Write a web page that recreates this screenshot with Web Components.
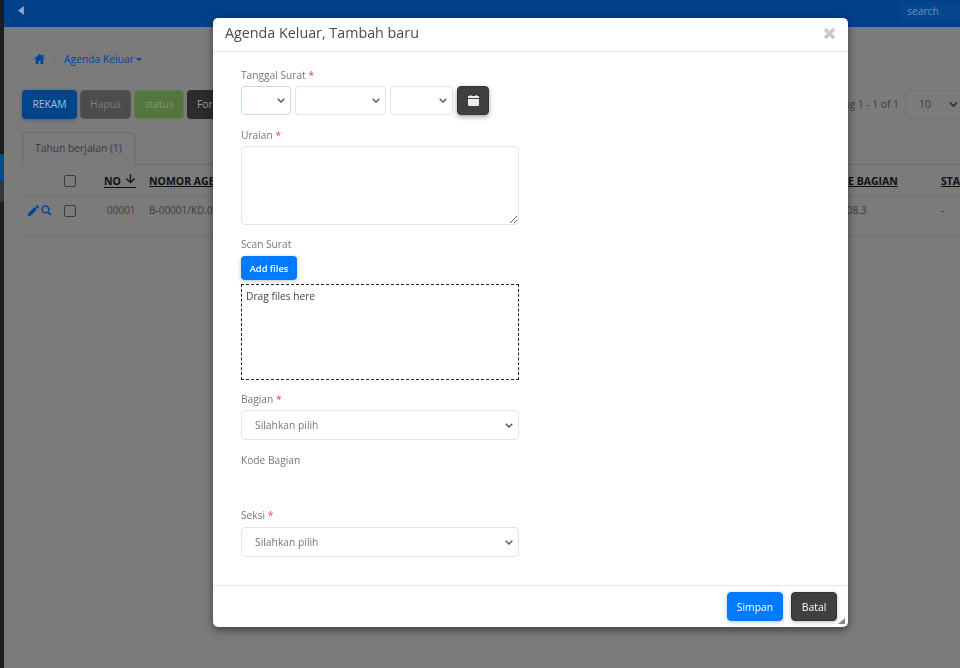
<!DOCTYPE html>
<html lang="id"><head><meta charset="utf-8"><title>Agenda Keluar</title>
<style>
html,body{margin:0;height:100%;overflow:hidden}
body{font-family:"Open Sans","Liberation Sans",sans-serif;background:#7b7b7b;font-size:10.300px;color:#444}
</style></head><body>
<x-app>
  <x-topbar slot="top"></x-topbar>
  <x-crumbs></x-crumbs>
  <x-toolbar></x-toolbar>
  <x-tabs></x-tabs>
  <x-table></x-table>
</x-app>
<x-modal title-text="Agenda Keluar, Tambah baru">
  <x-field label="Tanggal Surat" required gap="4"><x-date-row></x-date-row></x-field>
  <x-field label="Uraian" required gap="4" top="14"><x-area></x-area></x-field>
  <x-field label="Scan Surat" gap="5" top="13"><x-drop></x-drop></x-field>
  <x-field label="Bagian" required gap="4" top="13"><x-sel text="Silahkan pilih"></x-sel></x-field>
  <x-field label="Kode Bagian" top="14" bottom="42"></x-field>
  <x-field label="Seksi" required gap="5"><x-sel text="Silahkan pilih"></x-sel></x-field>
  <x-btn slot="foot" kind="blue">Simpan</x-btn>
  <x-btn slot="foot" kind="dark">Batal</x-btn>
</x-modal>
<script>
function def(name, css, html, init){
  customElements.define(name, class extends HTMLElement{
    connectedCallback(){
      if(this.shadowRoot) return;
      const r=this.attachShadow({mode:'open'});
      r.innerHTML='<style>'+css+'</style>'+(typeof html==='function'?html(this):html);
      if(init) init(this,r);
    }
  });
}
def('x-app',`:host{display:block;position:relative;width:960px;height:668px;overflow:hidden}
.side{position:absolute;left:0;top:0;bottom:0;width:4px;background:#1b1e21}
.side i{position:absolute;left:0;width:4px}
.main{margin-left:4px;display:flex;flex-direction:column}`,
`<div class="side"><i style="top:154px;height:27px;background:#00488f"></i><i style="top:181px;height:21px;background:#33383c"></i></div>
<div class="main"><slot name="top"></slot><slot></slot></div>`);

def('x-topbar',`:host{display:flex;height:27px;background:#024089;align-items:flex-start;justify-content:space-between;box-sizing:border-box;padding:2px 0 0 14px}
svg{width:6px;height:9px;margin-top:4px;display:block}
.s{width:60px;height:18px;background:#05468e;border-radius:3px 0 0 3px;color:#7393bb;font-size:10.300px;line-height:18px;padding-left:7px;box-sizing:border-box}`,
`<svg viewBox="0 0 7 11"><path d="M7 0v11L0 5.500z" fill="#8fa9cc"/></svg><div class="s">search</div>`);

def('x-crumbs',`:host{display:flex;align-items:center;height:24px;margin:20px 0 0 30px;color:#01469c;font-size:10.300px}
svg{width:11px;height:10px;display:block}
.sep{color:#666;margin:0 8.300px 0 7px}
.car{width:0;height:0;border:3px solid transparent;border-top:3px solid #01469c;border-bottom:0;margin-left:2px}`,
`<svg viewBox="0 0 13 12"><path d="M6.500 0 0 5.600l.7.800L2 5.300V12h3.300V8h2.400v4H11V5.300l1.300 1.100.7-.8L11 3.900V1H9v1.200z" fill="#01469c"/></svg><span class="sep">/</span><span>Agenda Keluar</span><span class="car"></span>`);

def('x-toolbar',`:host{display:flex;align-items:center;height:30px;margin:18px 0 0 18px;gap:3px;font-size:10.300px}
b{font-weight:400;height:29px;line-height:29px;border-radius:4px;text-align:center;box-sizing:border-box}
.r{background:#00458b;color:#a9bedb;width:55px;box-shadow:0 1px 4px rgba(0,0,0,.25)}
.h{background:#4c4c4c;color:#7c7c7c;width:51px;border:1px solid #565656;line-height:27px}
.s{background:#55753f;color:#7d9968;width:50px;border:1px solid #5f8048;line-height:27px}
.f{background:#2c2c2c;color:#9c9c9c;width:120px;text-align:left;padding-left:10px}
.sp{flex:1}
.t{color:#3c3c3c;margin-right:3px}
.v{width:70px;height:29px;border:1px solid #707070;border-radius:4px;box-sizing:border-box;color:#3c3c3c;line-height:27px;padding-left:13px;margin-right:-15px;position:relative}
.v svg{position:absolute;left:43px;top:10px;width:9px;height:7px}`,
`<b class="r">REKAM</b><b class="h">Hapus</b><b class="s">status</b><b class="f">Format</b><span class="sp"></span><span class="t">Showing 1 - 1 of 1</span><div class="v">10<svg viewBox="0 0 9 7"><path d="M1 1.500l3.500 3.500L8 1.500" fill="none" stroke="#2d2d2d" stroke-width="1.600"/></svg></div>`);

def('x-tabs',`:host{display:block;margin:13px 0 0 18px;height:32px;border-bottom:1px solid #6c6c6c}
div{display:inline-block;box-sizing:border-box;width:113px;height:33px;border:1px solid #6c6c6c;border-bottom:0;border-radius:4px 4px 0 0;padding-left:12px;line-height:31px;color:#3a3a3a;background:#7b7b7b}`,
`<div>Tahun berjalan (1)</div>`);

def('x-table',`:host{display:block;margin-left:18px;font-size:10px;color:#3c3c3c}
.row{display:grid;grid-template-columns:42px 40px 45px 676px 116px 1fr;border-bottom:1px solid #6e6e6e;align-items:center}
.head{height:32px;color:#111;font-weight:700;box-sizing:border-box;font-size:10.500px;padding-top:1px}
.body{height:39px;box-sizing:border-box;padding-bottom:12px}
u{text-underline-offset:1px;white-space:nowrap}
.st{overflow:hidden;white-space:nowrap}
.box{border:1px solid #3c3c3c;border-radius:2px;display:block;box-sizing:border-box;width:12px;height:12px}
.body .box{margin-top:2px}
.head .box{margin-top:-1px}
.act{display:flex;gap:2px;padding-left:6px}
.act svg{width:11px;height:11px;display:block}
.no{display:flex;align-items:center;gap:4px;border-bottom:1px solid #111;width:32px;line-height:12px}
.no svg{width:11px;height:11px;margin-top:-4px}
.n{padding-left:3px}`,
`<div class="row head"><span></span><span class="box"></span><span class="no">NO<svg viewBox="0 0 12 12"><path d="M6 1v9.500M1.500 6 6 10.500 10.500 6" fill="none" stroke="#111" stroke-width="1.400"/></svg></span><u>NOMOR AGENDA</u><u>KODE BAGIAN</u><u class="st">STA</u></div>
<div class="row body"><span class="act"><svg viewBox="0 0 12 12"><path d="M0 12V9.300L7 2.300 9.700 5 2.700 12zM7.900 1.400 9 .3a1 1 0 0 1 1.400 0l1.300 1.300a1 1 0 0 1 0 1.400L10.600 4.100z" fill="#01469c"/></svg><svg viewBox="0 0 12 12"><circle cx="4.800" cy="4.800" r="3.700" fill="none" stroke="#01469c" stroke-width="1.700"/><path d="M7.600 7.600 11 11" stroke="#01469c" stroke-width="2"/></svg></span><span class="box"></span><span class="n">00001</span><span>B-00001/KD.08</span><span>KD.008.3</span><span>-</span></div>`);

def('x-modal',`:host{position:fixed;left:213px;top:18px;width:635px;height:609px;background:#fff;border-radius:5px;box-shadow:0 3px 9px rgba(0,0,0,.5);display:flex;flex-direction:column;overflow:hidden}
header{box-sizing:border-box;border-bottom:1px solid #e5e5e5;display:flex;align-items:center;justify-content:space-between;padding:0 12px 3px 12px;flex:none;height:34px}
h1{margin:0;font:400 14.300px/20px "Open Sans",sans-serif;color:#4a4a4a}
header svg{width:13px;height:13px;display:block}
main{flex:1;padding:17px 0 0 28px;display:flex;flex-direction:column}
footer{flex:none;height:42px;border-top:1px solid #e5e5e5;box-sizing:border-box;display:flex;gap:8px;justify-content:flex-end;padding:6px 11px 0 0;position:relative}
.grip{position:absolute;right:3px;bottom:3px;width:7px;height:6px}`,
h=>`<header><h1>${h.getAttribute('title-text')}</h1><svg viewBox="0 0 13 13"><path d="M2 2 11 11M11 2 2 11" stroke="#c9c9c9" stroke-width="3.400"/></svg></header>
<main><slot></slot></main>
<footer><slot name="foot"></slot><svg class="grip" viewBox="0 0 7 6"><path d="M7 0v6H0z" fill="#888"/></svg></footer>`);

def('x-field',`:host{display:block}
label{display:block;font-size:10.200px;line-height:13px;color:#777}
em{font-style:normal;color:#e34b4b}`,
h=>`<label>${h.getAttribute('label')}${h.hasAttribute('required')?' <em>*</em>':''}</label><div id="c"><slot></slot></div>`,
(h,r)=>{
  h.style.marginTop=(h.getAttribute('top')||0)+'px';
  h.style.marginBottom=(h.getAttribute('bottom')||0)+'px';
  r.getElementById('c').style.marginTop=(h.getAttribute('gap')||0)+'px';
});

const chev="url(\"data:image/svg+xml,%3Csvg xmlns='http://www.w3.org/2000/svg' width='8' height='5'%3E%3Cpath d='M.7.7 4 4 7.300.7' fill='none' stroke='%23555' stroke-width='1.400'/%3E%3C/svg%3E\")";
const selCss=`select{display:block;appearance:none;-webkit-appearance:none;box-sizing:border-box;border:1px solid #e1e4e8;border-radius:4px;background:#fff ${chev} no-repeat right 5px center;color:#777;font:10.300px "Open Sans",sans-serif;padding:0 13px;height:30px;outline:0}`;
def('x-date-row',`:host{display:flex;gap:4px;height:29px}`+selCss+`select{height:29px}
.a{width:50px;border-color:#c5d9ee}.b{width:91px}.c{width:63px}
button{width:32px;height:29px;background:#3f3f3f;border:1px solid #333;border-radius:4px;padding:0;display:flex;align-items:center;justify-content:center;box-shadow:0 2px 5px rgba(0,0,0,.35)}
svg{width:11px;height:11px;display:block}`,
`<select class="a" aria-label="Tanggal"><option></option></select><select class="b" aria-label="Bulan"><option></option></select><select class="c" aria-label="Tahun"><option></option></select><button aria-label="Kalender"><svg viewBox="0 0 11 11"><path d="M0 2.200C0 1.500.5 1 1.200 1H2V0h1.200v1h4.600V0H9v1h.8c.7 0 1.200.5 1.200 1.200V3H0zM0 4h11v5.800c0 .7-.5 1.200-1.200 1.200H1.200C.5 11 0 10.500 0 9.800z" fill="#eee"/></svg></button>`);

def('x-area',`:host{display:block}
textarea{display:block;box-sizing:border-box;width:278px;height:79px;border:1px solid #e1e4e8;border-radius:4px;outline:0;margin:0;padding:6px;background:#fff}`,
`<textarea aria-label="Uraian"></textarea>`);

def('x-sel',`:host{display:block}`+selCss+`select{width:278px}`,
h=>`<select aria-label="pilih"><option>${h.getAttribute('text')}</option></select>`);

def('x-drop',`:host{display:block}
button{display:block;width:56px;height:24px;background:#007bff;color:#fff;border:0;border-radius:4px;font:600 9.300px "Open Sans",sans-serif;padding:0;box-shadow:0 1px 4px rgba(0,0,0,.25)}
div{margin-top:4px;box-sizing:border-box;width:278px;height:96px;border:1px dashed #222;padding:4px 4px;font-size:10.200px;line-height:15px;color:#444}`,
`<button>Add files</button><div>Drag files here</div>`);

def('x-btn',`:host{display:block}
button{display:block;height:29px;border-radius:4px;font:400 10.400px "Open Sans",sans-serif;padding:0;box-shadow:0 1px 4px rgba(0,0,0,.25)}
.blue{width:56px;background:#007bff;border:1px solid #007bff;color:#fff}
.dark{width:46px;background:#3f3f3f;border:1px solid #333;color:#fff}`,
h=>`<button class="${h.getAttribute('kind')}"><slot></slot></button>`);
</script>
</body></html>
